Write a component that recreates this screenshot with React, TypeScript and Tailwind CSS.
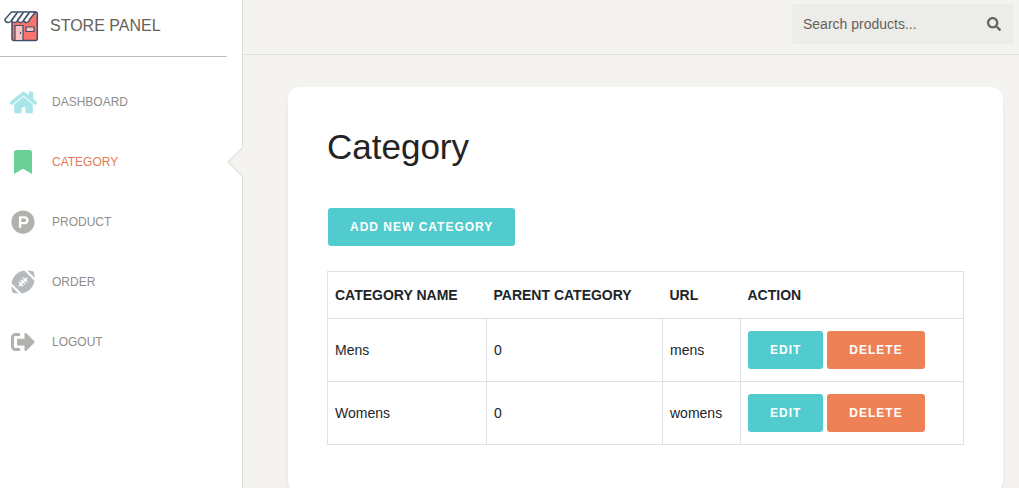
import type { ReactNode } from "react";
import type { IconType } from "react-icons";
import {
  FaBookmark,
  FaFootballBall,
  FaHome,
  FaProductHunt,
  FaSearch,
  FaSignOutAlt,
} from "react-icons/fa";

type NavItem = { label: string; icon: IconType; color: string; active?: boolean };

const navItems: NavItem[] = [
  { label: "DASHBOARD", icon: FaHome, color: "text-[#a8e5e6] text-[27px] stroke-current stroke-[14px]" },
  { label: "CATEGORY", icon: FaBookmark, color: "text-[#6bd098] text-2xl", active: true },
  { label: "PRODUCT", icon: FaProductHunt, color: "text-[#b2b1ae] text-2xl" },
  { label: "ORDER", icon: FaFootballBall, color: "text-[#b4babd] text-2xl" },
  { label: "LOGOUT", icon: FaSignOutAlt, color: "text-[#b2b1ae] text-2xl" },
];

const categories = [
  { name: "Mens", parent: 0, url: "mens" },
  { name: "Womens", parent: 0, url: "womens" },
];

function StoreLogo() {
  return (
    <svg viewBox="0 0 36 32" className="h-8 w-9 shrink-0" aria-hidden="true">
      <path
        d="M9 10V28.500Q9 30.500 11 30.500H32.500Q34.300 30.500 34.300 28.500V4Q34.300 2 32.500 2H27"
        fill="#f7736b"
        stroke="#3d5068"
        strokeWidth="1.500"
      />
      <path
        d="M8.500 2H32.500L26.500 9.500Q26 12.500 23.500 12.500T20.500 10.500Q19.500 12.500 17.500 12.500T14.500 10.500Q13.500 12.500 11.500 12.500T8.500 10.500Q7.500 12.500 5 12.500T1.800 9.500Z"
        fill="#fff"
        stroke="#3d5068"
        strokeWidth="1.400"
        strokeLinejoin="round"
      />
      <path d="M14.300 2.500 8.500 10.500M20.300 2.500 14.500 10.500M26.300 2.500 20.500 10.500" stroke="#3d5068" strokeWidth="1.700" />
      <path d="M12 30V15.500H20V30" fill="#fbc5c6" stroke="#3d5068" strokeWidth="1.200" />
      <path d="M17.500 22V24" stroke="#3d5068" strokeWidth="1.100" />
      <path d="M23 17H31V21.500H23Z" fill="#fbc5c6" stroke="#3d5068" strokeWidth="1.200" />
    </svg>
  );
}

function Button({ children, tone = "teal" }: { children: ReactNode; tone?: "teal" | "orange" }) {
  const color = tone === "teal" ? "bg-[#51cbce]" : "bg-[#ef8157]";
  return (
    <button
      type="button"
      className={`h-[38px] rounded-[3px] px-[22px] text-xs font-bold tracking-[1px] text-white ${color}`}
    >
      {children}
    </button>
  );
}

function Sidebar() {
  return (
    <aside className="w-[243px] shrink-0 border-r border-[#dddddb] bg-white">
      <div className="mr-[15px] flex h-[57px] items-center gap-[11px] border-b border-[#bdbdbd] pb-1 pl-[3px]">
        <StoreLogo />
        <a href="#" className="text-base text-[#66615b]">
          STORE PANEL
        </a>
      </div>
      <nav className="pt-[15px]">
        {navItems.map(({ label, icon: Icon, color, active }) => (
          <a
            key={label}
            href="#"
            aria-current={active ? "page" : undefined}
            className={`relative flex h-[60px] items-center gap-3.5 pl-2 text-xs ${
              active ? "text-[#e4795a]" : "text-[#8f8d8a]"
            }`}
          >
            <span className="flex w-[30px] justify-center">
              <Icon className={color} aria-hidden="true" />
            </span>
            {label}
            {active && (
              <span className="absolute top-[19px] -right-3 size-[22px] rotate-45 border-b border-l border-[#dddddb] bg-[#f4f3ef]" />
            )}
          </a>
        ))}
      </nav>
    </aside>
  );
}

export default function App() {
  const cell = "border border-[#dee2e6] px-[7px]";
  return (
    <div className="flex h-screen overflow-hidden bg-[#f4f3ef] font-['Liberation_Sans',Arial,sans-serif] text-sm text-[#212529]">
      <Sidebar />
      <div className="min-w-0 flex-1">
        <header className="flex h-[55px] items-start justify-end border-b border-[#dddddb] pt-1 pr-[5px]">
          <form className="flex h-10 w-[222px] items-center rounded-sm bg-[#ecece9]">
            <input
              type="text"
              aria-label="Search products"
              placeholder="Search products..."
              className="h-full min-w-0 flex-1 bg-transparent pl-[11px] text-sm text-[#66615b] outline-none placeholder:text-[#66615b]"
            />
            <button type="button" aria-label="Search" className="flex h-full w-10 items-center justify-center text-[#66615b]">
              <FaSearch />
            </button>
          </form>
        </header>
        <main className="pt-8 pr-4 pl-[45px]">
          <section className="rounded-xl bg-white px-[39px] pt-[39px] pb-12 shadow-[0_6px_10px_-4px_rgba(0,0,0,0.15)]">
            <h1 className="text-[35px] leading-[42px] text-[#252422]">Category</h1>
            <div className="mt-10 flex pl-px">
              <Button>ADD NEW CATEGORY</Button>
            </div>
            <table className="mt-[25px] w-full table-fixed border-collapse border border-[#dee2e6] text-left">
              <colgroup>
                <col className="w-[159px]" />
                <col className="w-[176px]" />
                <col className="w-[78px]" />
                <col />
              </colgroup>
              <thead>
                <tr className="h-[47px]">
                  <th className="px-[7px]">CATEGORY NAME</th>
                  <th className="px-[7px]">PARENT CATEGORY</th>
                  <th className="px-[7px]">URL</th>
                  <th className="px-[7px]">ACTION</th>
                </tr>
              </thead>
              <tbody>
                {categories.map((c) => (
                  <tr key={c.name} className="h-[63px]">
                    <td className={cell}>{c.name}</td>
                    <td className={cell}>{c.parent}</td>
                    <td className={cell}>{c.url}</td>
                    <td className={cell}>
                      <div className="flex gap-1">
                        <Button>EDIT</Button>
                        <Button tone="orange">DELETE</Button>
                      </div>
                    </td>
                  </tr>
                ))}
              </tbody>
            </table>
          </section>
        </main>
      </div>
    </div>
  );
}
